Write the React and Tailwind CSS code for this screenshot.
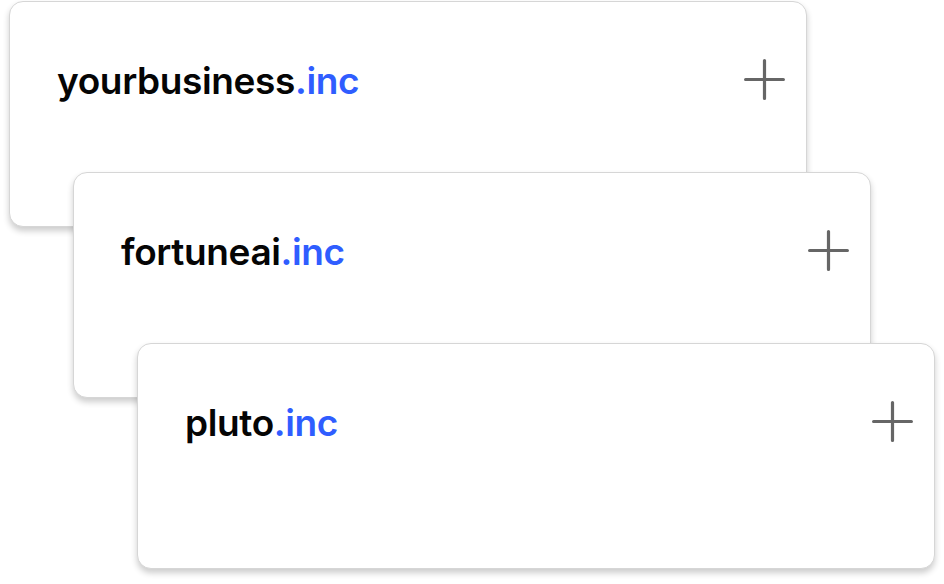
const companies = [
  { name: 'yourbusiness', offset: 'ml-[9px] mt-[1px]' },
  { name: 'fortuneai', offset: 'ml-[73px] -mt-[55px]' },
  { name: 'pluto', offset: 'ml-[137px] -mt-[55px]' },
]

function PlusIcon() {
  return (
    <svg width="41" height="41" viewBox="0 0 41 41" fill="none" stroke="#666666" strokeWidth="3.2" strokeLinecap="round">
      <path d="M20.5 1.6v37.8M1.6 20.5h37.8" />
    </svg>
  )
}

function CompanyCard({ name, offset }) {
  return (
    <div className={`${offset} relative w-[798px] h-[226px] rounded-[14px] border border-[#d6d6d6] bg-white shadow-[0_4px_6px_rgba(0,0,0,0.2)] flex justify-between items-start`}>
      <div className="pl-[47px] pt-[61px] text-[37px] leading-[36px] font-semibold tracking-[-0.01em] text-[#050505]">
        {name}<span className="text-[#2f5dff]">.inc</span>
      </div>
      <div className="mt-[57px] mr-[21px]">
        <PlusIcon />
      </div>
    </div>
  )
}

export default function App() {
  return (
    <div className="w-[944px] h-[584px] bg-white overflow-hidden" style={{ fontFamily: 'Inter, "Noto Sans", sans-serif' }}>
      {companies.map((c) => (
        <CompanyCard key={c.name} {...c} />
      ))}
    </div>
  )
}
